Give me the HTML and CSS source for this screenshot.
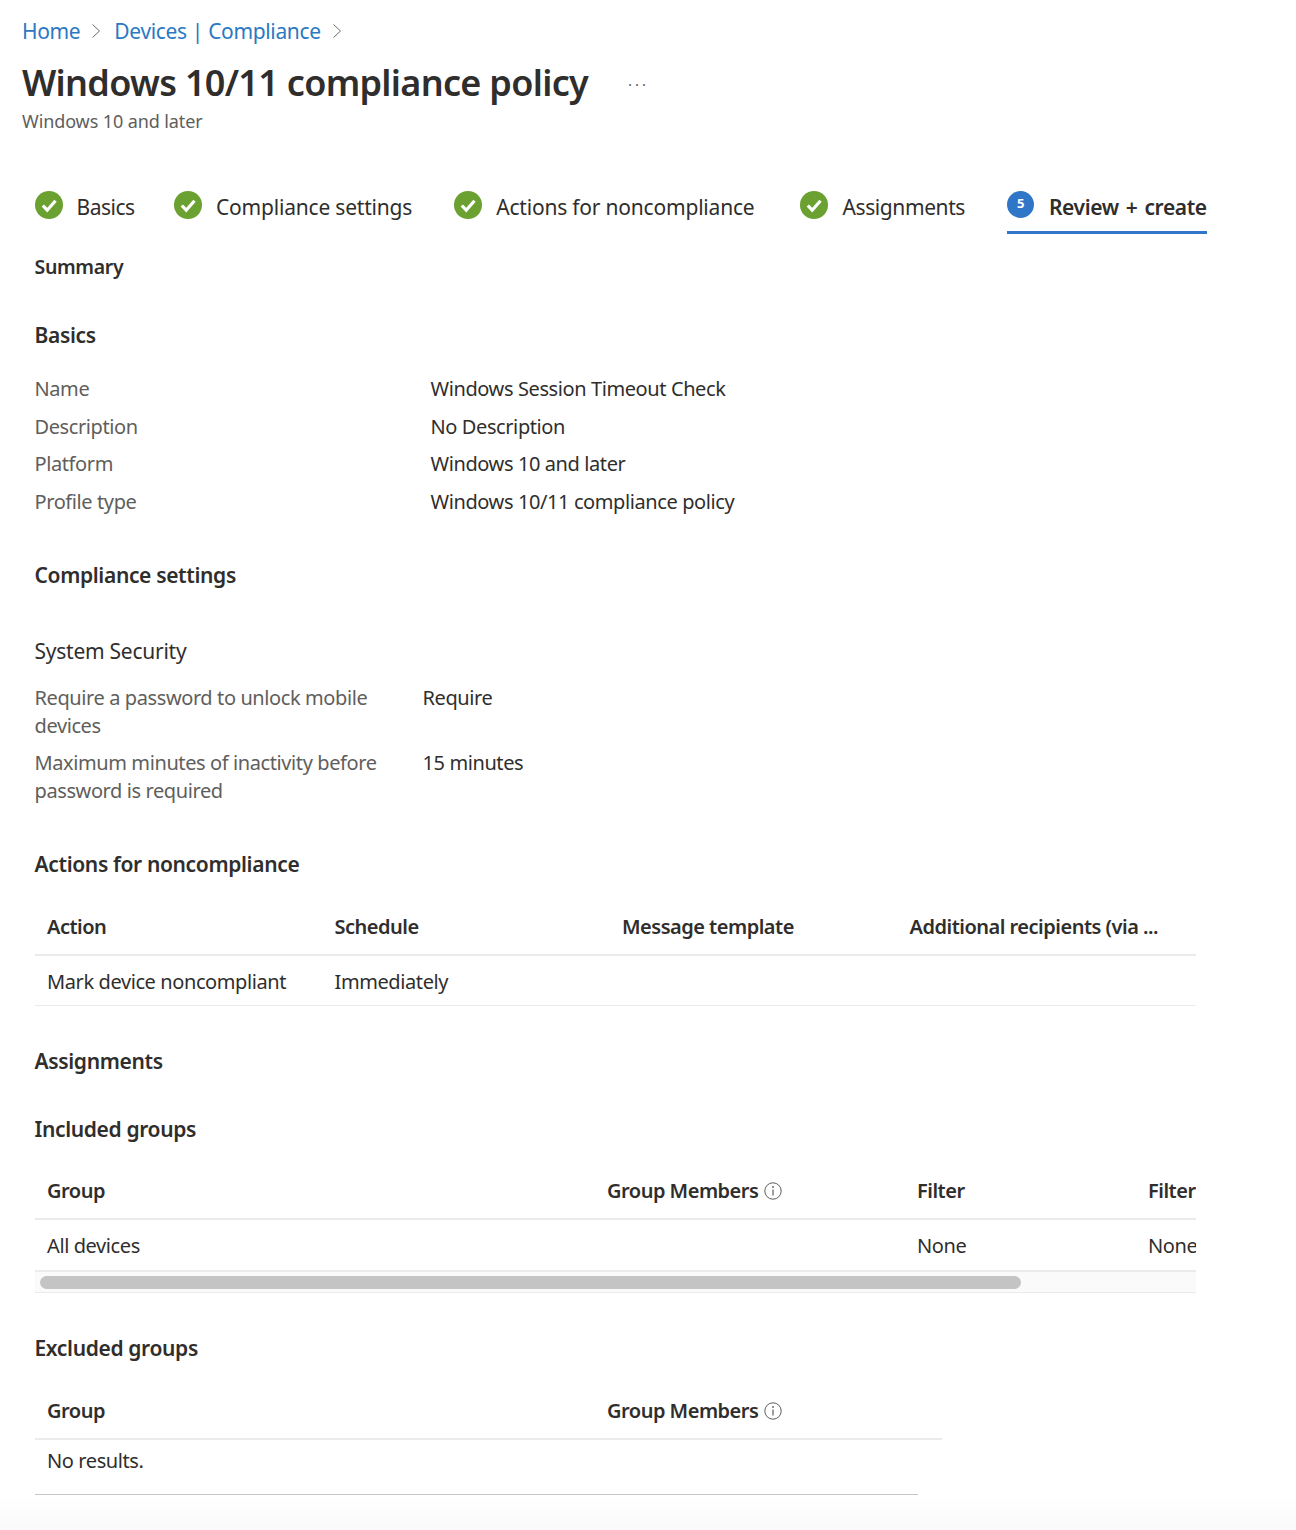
FILE: index.html
```html
<!DOCTYPE html>
<html lang="en">
  <head>
    <meta charset="UTF-8" />
    <title>Windows 10/11 compliance policy</title>
    <link rel="stylesheet" href="styles.css">
  </head>
  <body>
    <header class="page-header">
      <nav class="breadcrumb">
        <a href="#">Home</a>
        <svg class="crumb-sep" width="10" height="16" viewBox="0 0 10 16"><path d="M1.500 1.500 8.500 8l-7 6.500" fill="none" stroke="#6b6b6b" stroke-width="1"/></svg>
        <a href="#">Devices | Compliance</a>
        <svg class="crumb-sep" width="10" height="16" viewBox="0 0 10 16"><path d="M1.500 1.500 8.500 8l-7 6.500" fill="none" stroke="#6b6b6b" stroke-width="1"/></svg>
      </nav>
      <div class="title-row">
        <h1>Windows 10/11 compliance policy</h1>
        <span class="more">...</span>
      </div>
      <p class="subtitle">Windows 10 and later</p>
    </header>

    <div class="tabs">
      <div class="tab tab-basics">
        <svg class="step" viewBox="0 0 28 28"><circle cx="14" cy="14" r="14" fill="#6ba131"/><path d="M7.800 14.500 12.200 19.200l8.300-9.500" fill="none" stroke="#fff" stroke-width="3.200"/></svg>
        <span>Basics</span>
      </div>
      <div class="tab tab-settings">
        <svg class="step" viewBox="0 0 28 28"><circle cx="14" cy="14" r="14" fill="#6ba131"/><path d="M7.800 14.500 12.200 19.200l8.300-9.500" fill="none" stroke="#fff" stroke-width="3.200"/></svg>
        <span>Compliance settings</span>
      </div>
      <div class="tab tab-actions">
        <svg class="step" viewBox="0 0 28 28"><circle cx="14" cy="14" r="14" fill="#6ba131"/><path d="M7.800 14.500 12.200 19.200l8.300-9.500" fill="none" stroke="#fff" stroke-width="3.200"/></svg>
        <span>Actions for noncompliance</span>
      </div>
      <div class="tab tab-assign">
        <svg class="step" viewBox="0 0 28 28"><circle cx="14" cy="14" r="14" fill="#6ba131"/><path d="M7.800 14.500 12.200 19.200l8.300-9.500" fill="none" stroke="#fff" stroke-width="3.200"/></svg>
        <span>Assignments</span>
      </div>
      <div class="tab tab-current">
        <span class="step-num">5</span>
        <span>Review + create</span>
      </div>
    </div>

    <main class="content">
      <h2 class="summary">Summary</h2>

      <h2 class="sec-basics">Basics</h2>
      <dl class="props">
        <dt>Name</dt><dd>Windows Session Timeout Check</dd>
        <dt>Description</dt><dd>No Description</dd>
        <dt>Platform</dt><dd>Windows 10 and later</dd>
        <dt>Profile type</dt><dd>Windows 10/11 compliance policy</dd>
      </dl>

      <h2 class="sec-settings">Compliance settings</h2>
      <h3 class="sys">System Security</h3>
      <dl class="settings">
        <dt>Require a password to unlock mobile devices</dt><dd>Require</dd>
        <dt>Maximum minutes of inactivity before password is required</dt><dd>15 minutes</dd>
      </dl>

      <h2 class="sec-actions">Actions for noncompliance</h2>
      <div class="table actions-table">
        <div class="row head">
          <span>Action</span><span>Schedule</span><span>Message template</span><span>Additional recipients (via ...</span>
        </div>
        <div class="row body">
          <span>Mark device noncompliant</span><span>Immediately</span><span></span><span></span>
        </div>
      </div>

      <h2 class="sec-assign">Assignments</h2>
      <h2 class="sec-included">Included groups</h2>
      <div class="table included-table">
        <div class="row head">
          <span>Group</span>
          <span class="with-info">Group Members
            <svg class="info" viewBox="0 0 18 18"><circle cx="9" cy="9" r="8.200" fill="none" stroke="#605e5c" stroke-width="1"/><path d="M9 7.500V13.500" stroke="#605e5c" stroke-width="1.200"/><circle cx="9" cy="5" r="0.900" fill="#605e5c"/></svg>
          </span>
          <span>Filter</span><span>Filter</span>
        </div>
        <div class="row body">
          <span>All devices</span><span></span><span>None</span><span>None</span>
        </div>
        <div class="scrollbar"><div class="thumb"></div></div>
      </div>

      <h2 class="sec-excluded">Excluded groups</h2>
      <div class="table excluded-table">
        <div class="row head">
          <span>Group</span>
          <span class="with-info">Group Members
            <svg class="info" viewBox="0 0 18 18"><circle cx="9" cy="9" r="8.200" fill="none" stroke="#605e5c" stroke-width="1"/><path d="M9 7.500V13.500" stroke="#605e5c" stroke-width="1.200"/><circle cx="9" cy="5" r="0.900" fill="#605e5c"/></svg>
          </span>
        </div>
        <div class="no-results">No results.</div>
      </div>
    </main>
    <div class="page-bottom"></div>
  </body>
</html>
```
FILE: styles.css
```css
/* Page */
:root {
  --text: #2f2e2d;
  --muted: #605e5c;
  --link: #2b79c2;
  --line: #edebe9;
}

html,
body {
  height: 1530px;
  overflow: hidden;
}

body {
  margin: 0;
  background-color: #fff;
  color: var(--text);
  font-family: "Noto Sans", "Open Sans", sans-serif;
  font-size: 20px;
  line-height: 28px;
  letter-spacing: -0.4px;
}

h1,
h2,
h3,
p,
dl,
dd {
  margin: 0;
}

/* Header */
.page-header {
  padding: 17px 0 0 22px;
}

.breadcrumb {
  display: flex;
  align-items: center;
  height: 28px;
  font-size: 21px;
  letter-spacing: -0.35px;
}

.breadcrumb a {
  color: var(--link);
  text-decoration: none;
}

.crumb-sep {
  margin: 0 13px 0 11px;
}

.title-row {
  display: flex;
  align-items: center;
  margin-top: 11px;
  height: 54px;
}

h1 {
  font-size: 36px;
  font-weight: 600;
  line-height: 54px;
  letter-spacing: -0.7px;
}

.more {
  margin: -6px 0 0 40px;
  font-size: 15px;
  color: var(--muted);
  letter-spacing: 3px;
}

.subtitle {
  margin-top: -1px;
  font-size: 18px;
  line-height: 24px;
  color: var(--muted);
  letter-spacing: -0.1px;
}

/* Tabs */
.tabs {
  display: flex;
  margin: 48px 0 0 34.500px;
  height: 53px;
}

.tab {
  display: flex;
  align-items: flex-start;
  gap: 14px;
  padding-top: 12px;
  font-size: 21px;
  letter-spacing: -0.2px;
}

.tab-basics {
  letter-spacing: -0.5px;
}

.step {
  width: 28px;
  height: 28px;
  flex-shrink: 0;
  margin-top: -2px;
}

.tab-settings {
  margin-left: 39.500px;
}

.tab-actions {
  margin-left: 42px;
}

.tab-assign {
  margin-left: 46px;
  letter-spacing: -0.4px;
}

.tab-current {
  margin-left: 42px;
  gap: 15px;
  font-weight: 600;
  width: 200px;
  box-sizing: border-box;
  border-bottom: 3px solid #2f76c8;
  white-space: nowrap;
  letter-spacing: -0.4px;
  word-spacing: 2px;
}

.step-num {
  width: 27px;
  height: 27px;
  flex-shrink: 0;
  border-radius: 50%;
  background-color: #2f76c8;
  color: #fff;
  font-size: 13px;
  font-weight: 700;
  line-height: 25px;
  text-align: center;
  margin-top: -2px;
}

/* Sections */
.content {
  padding-left: 34.500px;
}

h2 {
  font-size: 21px;
  font-weight: 600;
  line-height: 28px;
  letter-spacing: -0.35px;
}

h3 {
  font-size: 21px;
  font-weight: 400;
  line-height: 28px;
  letter-spacing: -0.25px;
}

.summary {
  margin-top: 19px;
  font-size: 19.500px;
}

.sec-basics {
  margin-top: 40px;
}

.props {
  display: grid;
  grid-template-columns: 396px 1fr;
  grid-auto-rows: 37.700px;
  margin-top: 26px;
}

dt {
  color: var(--muted);
}

.sec-settings {
  margin-top: 35px;
}

.sys {
  margin-top: 48px;
}

.settings {
  display: grid;
  grid-template-columns: 388px 1fr;
  margin-top: 19px;
  row-gap: 9px;
}

.settings dt {
  width: 360px;
}

.sec-actions {
  margin-top: 45px;
}

/* Tables */
.table {
  width: 1161px;
  overflow: hidden;
}

.row {
  display: grid;
  align-items: center;
  box-sizing: border-box;
  border-bottom: 1px solid var(--line);
}

.row span {
  padding-left: 12.500px;
  white-space: nowrap;
}

.row.head {
  height: 56px;
  font-weight: 600;
  border-bottom-width: 2px;
  font-size: 20px;
  letter-spacing: -0.5px;
}

.row.body {
  height: 50px;
  padding-top: 3px;
}

.actions-table {
  margin-top: 22px;
}

.actions-table .row {
  grid-template-columns: repeat(4, 287.500px);
}

.sec-assign {
  margin-top: 41px;
}

.sec-included {
  margin-top: 40px;
}

.included-table {
  margin-top: 21px;
}

.included-table .row {
  grid-template-columns: 560px 310px 231px 232px;
}

.included-table .row.body {
  height: 52px;
  border-bottom: 2px solid var(--line);
}

.with-info {
  display: flex;
  align-items: center;
  gap: 6px;
}

.info {
  width: 18px;
  height: 18px;
}

.scrollbar {
  height: 21px;
  box-sizing: border-box;
  padding: 4px 0 4px 5px;
  background-color: #fafafa;
  border-bottom: 1px solid var(--line);
}

.thumb {
  width: 981px;
  height: 13px;
  border-radius: 7px;
  background-color: #c4c4c4;
}

.sec-excluded {
  margin-top: 41px;
}

.excluded-table {
  margin-top: 22px;
  width: 907px;
}

.excluded-table .row {
  grid-template-columns: 560px 347px;
}

.no-results {
  width: 883px;
  height: 55px;
  padding: 7px 0 0 12.500px;
  box-sizing: border-box;
  border-bottom: 1px solid #c8c6c4;
}

.page-bottom {
  height: 36px;
  background: linear-gradient(#fff, #f9f9f9);
}
```
